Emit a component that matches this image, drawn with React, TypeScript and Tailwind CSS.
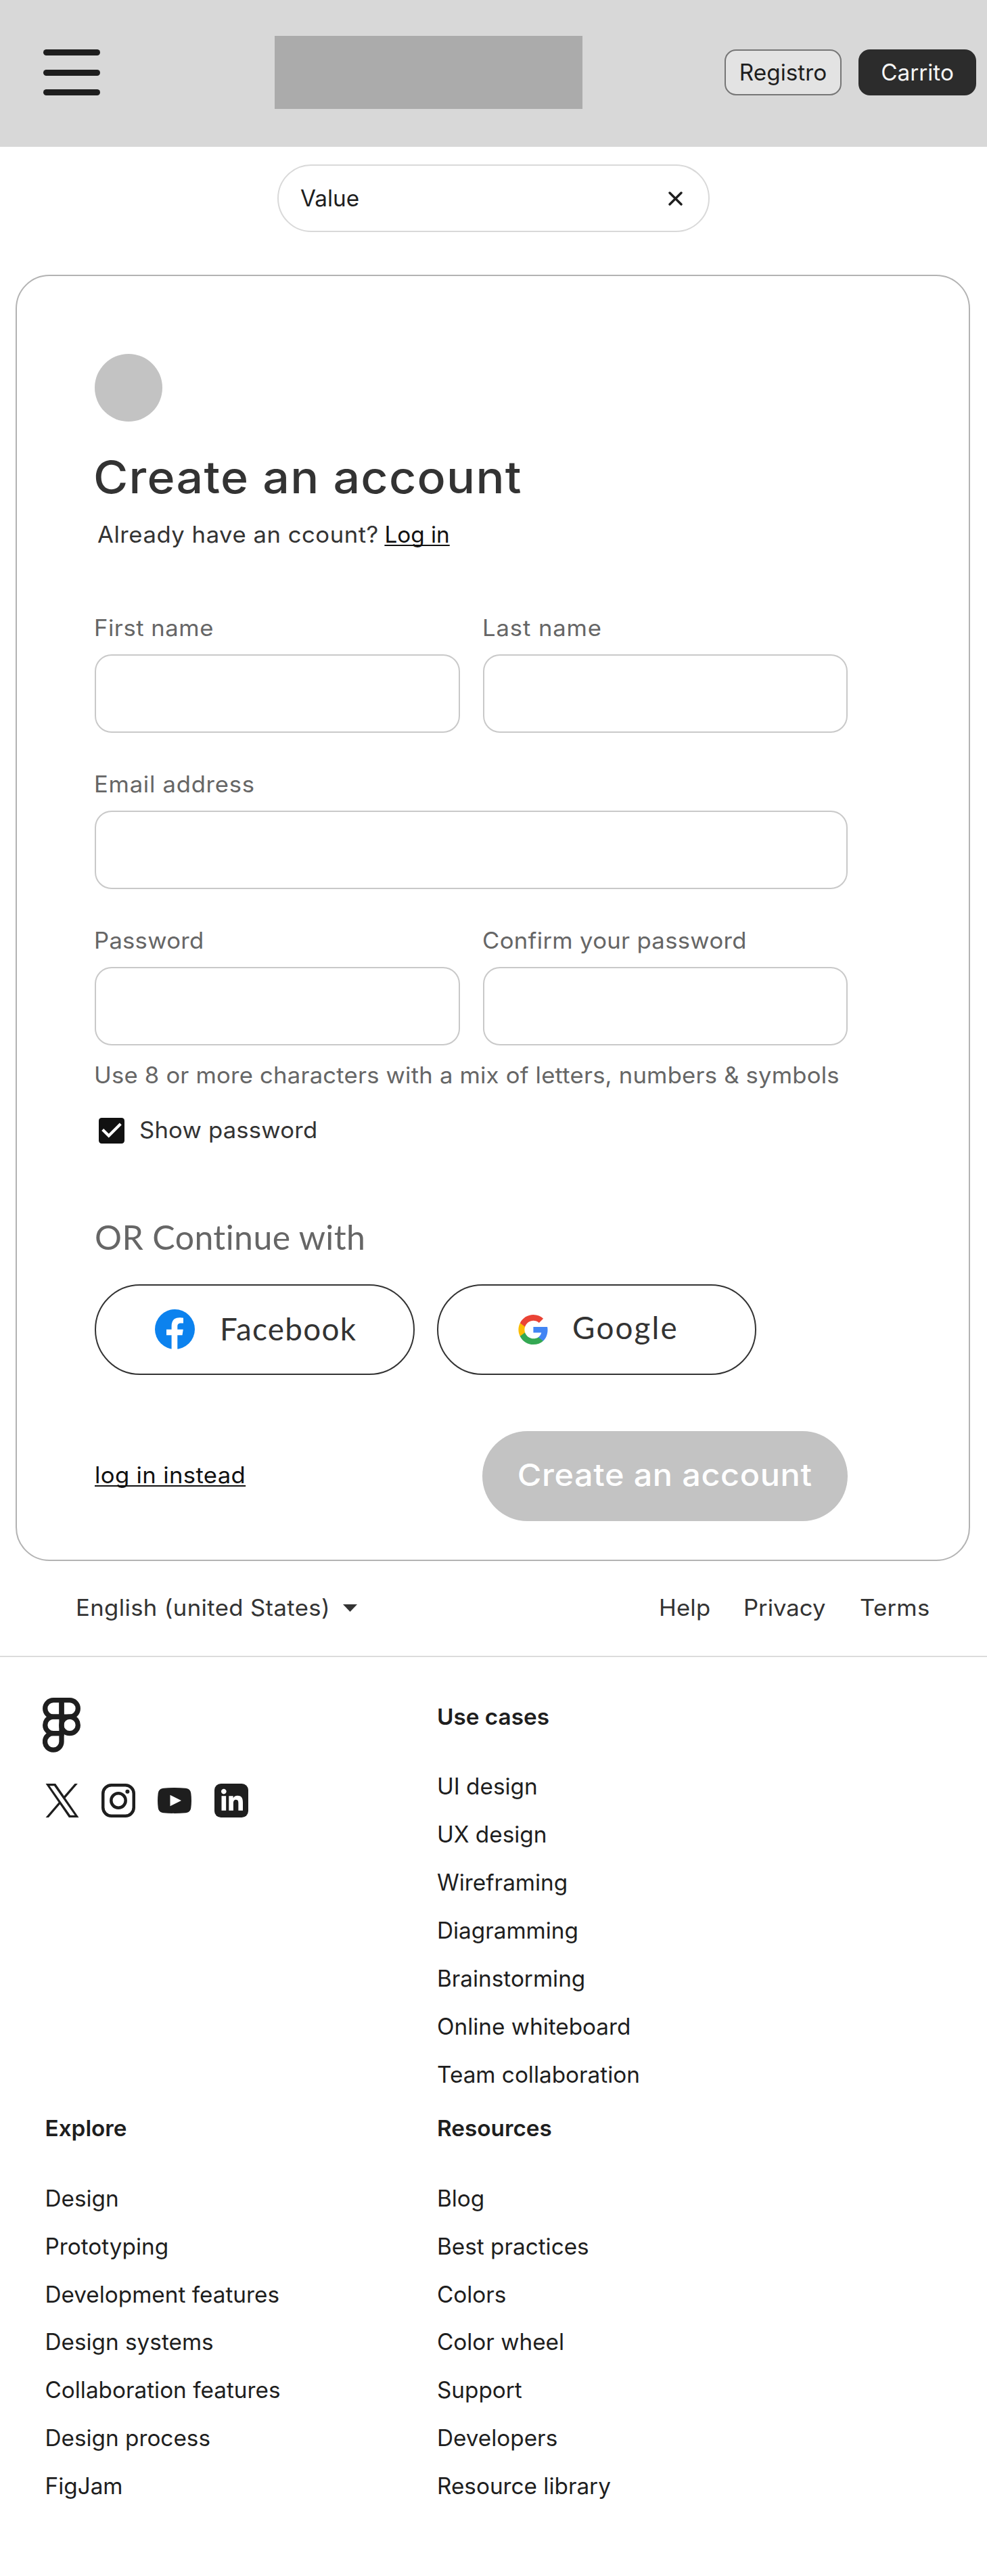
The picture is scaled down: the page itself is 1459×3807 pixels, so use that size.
import type { ReactNode } from "react";

function Burger() {
  return (
    <div className="ml-[64px] flex w-[84px] flex-col gap-[20.5px]">
      <span className="h-[9px] rounded-full bg-[#1e1e1e]" />
      <span className="h-[9px] rounded-full bg-[#1e1e1e]" />
      <span className="h-[9px] rounded-full bg-[#1e1e1e]" />
    </div>
  );
}

function Field({ label, className }: { label: string; className: string }) {
  return (
    <label className="block flex-1">
      <span className={`-ml-px block h-10 origin-left scale-x-[1.04] leading-10 whitespace-nowrap text-[#666] ${className}`}>{label}</span>
      <input className="mt-[19px] block h-[116px] w-full rounded-[25px] border-2 border-[#c9c9c9] bg-transparent px-8 outline-none" />
    </label>
  );
}

function FacebookIcon() {
  return (
    <svg width="59" height="59" viewBox="0 0 59 59" className="shrink-0">
      <circle cx="29.5" cy="29.5" r="29.5" fill="#0c82ee" />
      <path
        d="M24.6 59V38.3H17v-8.6h7.6V25c0-8.6 4.300-12.7 11.800-12.700 2.400 0 4.400.2 5.600.4v7.700h-3.600c-3.600 0-5.100 1.700-5.100 5.100v4.200h8.500l-1.300 8.600h-7.200V59z"
        fill="#fff"
      />
    </svg>
  );
}

function GoogleIcon() {
  return (
    <svg width="44" height="44" viewBox="0.8 1 22 22" className="shrink-0">
      <path fill="#4285f4" d="M22.56 12.25c0-.78-.07-1.53-.2-2.25H12v4.26h5.92c-.26 1.37-1.04 2.53-2.21 3.31v2.77h3.57c2.08-1.92 3.28-4.74 3.28-8.09z" />
      <path fill="#34a853" d="M12 23c2.97 0 5.46-.98 7.28-2.66l-3.57-2.77c-.98.66-2.23 1.06-3.71 1.06-2.86 0-5.29-1.93-6.16-4.53H2.18v2.84C3.99 20.53 7.7 23 12 23z" />
      <path fill="#fbbc04" d="M5.84 14.09c-.22-.66-.35-1.36-.35-2.09s.13-1.43.35-2.09V7.07H2.18C1.43 8.55 1 10.22 1 12s.43 3.45 1.18 4.93l2.85-2.22.81-.62z" />
      <path fill="#ea4335" d="M12 5.38c1.62 0 3.06.56 4.21 1.64l3.15-3.15C17.45 2.09 14.97 1 12 1 7.7 1 3.99 3.47 2.18 7.07l3.66 2.84c.87-2.6 3.3-4.53 6.16-4.53z" />
    </svg>
  );
}

function FigmaLogo() {
  return (
    <svg width="56" height="81" viewBox="0 0 56 81" fill="none" stroke="#1e1e1e" strokeWidth="7.3">
      <path d="M28 3.700H15.950a12.250 12.250 0 0 0 0 24.500H28z" />
      <path d="M28 3.700h12.050a12.250 12.250 0 0 1 0 24.500H28z" />
      <path d="M28 28.200H15.950a12.250 12.250 0 0 0 0 24.500H28z" />
      <circle cx="40.05" cy="40.45" r="12.25" />
      <path d="M28 52.700H15.950a12.250 12.250 0 1 0 12.050 12.250z" />
    </svg>
  );
}

function Socials() {
  return (
    <div className="ml-1 mt-[46px] flex gap-[33.2px]">
      <svg width="50" height="50" viewBox="0 0 1200 1227" fill="#1e1e1e">
        <path d="M714.163 519.284L1160.89 0H1055.03L667.137 450.887L357.328 0H0L468.492 681.821L0 1226.37H105.866L515.491 750.218L842.672 1226.37H1200L714.137 519.284H714.163ZM569.165 687.828L521.697 619.934L144.011 79.6944H306.615L611.412 515.685L658.88 583.579L1055.08 1150.3H892.476L569.165 687.854V687.828Z" />
      </svg>
      <svg width="50" height="50" viewBox="0 0 50 50" fill="none" stroke="#1e1e1e" strokeWidth="4.500">
        <rect x="2.250" y="2.250" width="45.500" height="45.500" rx="12.500" />
        <circle cx="25" cy="25" r="10.700" />
        <circle cx="38.400" cy="11.700" r="3" fill="#1e1e1e" stroke="none" />
      </svg>
      <svg width="50" height="50" viewBox="0 0 50 50">
        <path
          d="M9 6.700C19 5.900 31 5.900 41 6.700c5 .5 7.600 2.700 8.300 7.800.9 7 .9 14 0 21-.7 5.100-3.300 7.300-8.300 7.800-10 .8-22 .8-32 0-5-.5-7.600-2.700-8.300-7.800-.9-7-.9-14 0-21C1.400 9.400 4 7.200 9 6.700z"
          fill="#1e1e1e"
        />
        <path d="M18.500 16.700v16.600L35 25z" fill="#fff" />
      </svg>
      <svg width="50" height="50" viewBox="0 0 24 24">
        <rect width="24" height="24" rx="4.600" fill="#1e1e1e" />
        <path
          transform="translate(1.860 .75) scale(.895)"
          fill="#fff"
          d="M20.447 20.452h-3.554v-5.569c0-1.328-.027-3.037-1.852-3.037-1.853 0-2.136 1.445-2.136 2.939v5.667H9.351V9h3.414v1.561h.046c.477-.9 1.637-1.850 3.370-1.850 3.601 0 4.267 2.370 4.267 5.455v6.286zM5.337 7.433c-1.144 0-2.063-.926-2.063-2.065 0-1.138.92-2.063 2.063-2.063 1.140 0 2.064.925 2.064 2.063 0 1.139-.925 2.065-2.064 2.065zm1.782 13.019H3.555V9h3.564v11.452z"
        />
      </svg>
    </div>
  );
}

function LinkList({ title, items }: { title: string; items: string[] }) {
  return (
    <section>
      <h3 className="h-[46.6px] font-semibold leading-[46.6px]">{title}</h3>
      <ul className="mt-[45.4px]">
        {items.map((item) => (
          <li key={item} className="h-[70.85px] leading-[70.85px]">{item}</li>
        ))}
      </ul>
    </section>
  );
}

function SocialButton({ className, children }: { className: string; children: ReactNode }) {
  return (
    <button className={`flex h-[134px] items-center rounded-full border-2 border-[#333] font-[Lato,sans-serif] text-[45.8px] leading-[54px] text-[#333] ${className}`}>
      {children}
    </button>
  );
}

export default function App() {
  return (
    <div className="h-[3807px] w-[1459px] overflow-hidden bg-white font-[Inter,sans-serif] text-[33.3px] text-[#1e1e1e]">
      <header className="flex h-[217px] items-center bg-[#d8d8d8] pb-[3px] pr-4">
        <Burger />
        <div className="ml-[258px] h-[108px] w-[455px] bg-[#ababab]" />
        <div className="ml-auto flex gap-[25px] leading-10">
          <button className="h-[68px] w-[173px] rounded-[17px] border-2 border-[#767676] bg-[#e3e3e3]">Registro</button>
          <button className="h-[68px] w-[174px] rounded-[17px] bg-[#2c2c2c] text-[#f5f5f5]">Carrito</button>
        </div>
      </header>

      <div className="ml-[410px] mt-[26px] flex h-[100px] w-[639px] items-center justify-between rounded-full border-2 border-[#d9d9d9] pl-[32px] pr-[38px]">
        <span className="mt-0.5">Value</span>
        <svg width="21" height="21" viewBox="0 0 21 21" fill="none" stroke="#1e1e1e" strokeWidth="3.400" strokeLinecap="round">
          <path d="M2 2l17 17M19 2L2 19" />
        </svg>
      </div>

      <main className="ml-[23px] mt-[63px] h-[1901px] w-[1411px] rounded-[50px] border-2 border-[#b3b3b3] pl-[115px] pt-[115px]">
        <div className="w-[1113px]">
          <div className="size-[100px] rounded-full bg-[#c3c3c3]" />
          <h1 className="-ml-0.5 mt-[42px] h-20 origin-left scale-x-[1.06] whitespace-nowrap text-[66px] font-medium leading-[80px] tracking-[1.18px] text-[#333]">
            Create an account
          </h1>
          <p className="mt-[25px] flex h-10 pl-1 leading-10 text-[#333]">
            <span className="w-[424.400px] origin-left scale-x-[1.04] tracking-[0.52px]">Already have an ccount?</span>
            <a className="text-[#111] underline decoration-2 underline-offset-[3px] [text-decoration-skip-ink:none]">Log in</a>
          </p>

          <div className="mt-[98px] flex gap-[34px]">
            <Field label="First name" className="tracking-[0.5px]" />
            <Field label="Last name" className="tracking-[0.87px]" />
          </div>
          <div className="mt-[56.2px] flex">
            <Field label="Email address" className="tracking-[0.71px]" />
          </div>
          <div className="mt-[56.2px] flex gap-[34px]">
            <Field label="Password" className="tracking-[0.25px]" />
            <Field label="Confirm your password" className="tracking-[0.32px]" />
          </div>
          <p className="-ml-px mt-[23.5px] h-10 origin-left scale-x-[1.04] whitespace-nowrap leading-10 tracking-[0.2px] text-[#666]">
            Use 8 or more characters with a mix of letters, numbers &amp; symbols
          </p>
          <label className="mt-[37.5px] flex h-[50px] items-center gap-[22px] pl-[6px] text-[#333]">
            <svg width="38" height="38" viewBox="0 0 18 18">
              <rect width="18" height="18" rx="2" fill="#111" />
              <path d="M7 14L2 9l1.410-1.410L7 11.170l7.590-7.590L16 5z" fill="#fff" />
            </svg>
            <span className="origin-left scale-x-[1.04] tracking-[0.2px]">Show password</span>
          </label>

          <h2 className="mt-[101.5px] h-[60px] font-[Lato,sans-serif] text-[50px] leading-[60px] tracking-[0.4px] text-[#666]">OR Continue with</h2>
          <div className="mt-[40px] flex gap-[33px]">
            <SocialButton className="w-[473px] gap-[37px] pl-[87px]">
              <FacebookIcon />
              <span className="mb-0.5 tracking-[1.3px]">Facebook</span>
            </SocialButton>
            <SocialButton className="w-[472px] gap-[36px] pl-[118px]">
              <GoogleIcon />
              <span className="mb-[6px] tracking-[2.2px]">Google</span>
            </SocialButton>
          </div>

          <div className="mt-[83px] flex h-[133px] items-center justify-between">
            <a className="origin-left scale-x-[1.04] tracking-[0.35px] text-[#111] underline decoration-2 underline-offset-[3px] [text-decoration-skip-ink:none]">
              log in instead
            </a>
            <button className="h-[133px] w-[540px] rounded-full bg-[#c3c3c3] pb-[3px] text-[45.8px] font-medium leading-[54px] tracking-[0.6px] text-white">
              <span className="inline-block scale-x-[1.06]">Create an account</span>
            </button>
          </div>
        </div>
      </main>

      <nav className="mt-[49px] flex h-10 items-center pl-[112px] pr-[83px] leading-10 whitespace-nowrap text-[#333]">
        <span className="w-[376.500px] origin-left scale-x-[1.04] tracking-[0.37px]">English (united States)</span>
        <svg width="21" height="11" viewBox="0 0 21 11" className="ml-[18px]">
          <path d="M0 0h21L10.500 11z" fill="#333" />
        </svg>
        <span className="ml-auto w-[125px] origin-left scale-x-[1.04] tracking-[0.2px]">Help</span>
        <span className="w-[172px] origin-left scale-x-[1.04]">Privacy</span>
        <span className="w-[105px] origin-left scale-x-[1.04] tracking-[0.3px]">Terms</span>
      </nav>

      <footer className="mt-[50.5px] border-t-[2.5px] border-[#dcdcdc] pl-[63px]">
        <div className="grid grid-cols-[583px_1fr]">
          <div className="pt-[60px]">
            <FigmaLogo />
            <Socials />
          </div>
          <div className="pt-[65px]">
            <LinkList
              title="Use cases"
              items={["UI design", "UX design", "Wireframing", "Diagramming", "Brainstorming", "Online whiteboard", "Team collaboration"]}
            />
          </div>
          <div className="pl-[3.5px] pt-[20.5px]">
            <LinkList
              title="Explore"
              items={["Design", "Prototyping", "Development features", "Design systems", "Collaboration features", "Design process", "FigJam"]}
            />
          </div>
          <div className="pt-[20.5px]">
            <LinkList
              title="Resources"
              items={["Blog", "Best practices", "Colors", "Color wheel", "Support", "Developers", "Resource library"]}
            />
          </div>
        </div>
      </footer>
    </div>
  );
}
